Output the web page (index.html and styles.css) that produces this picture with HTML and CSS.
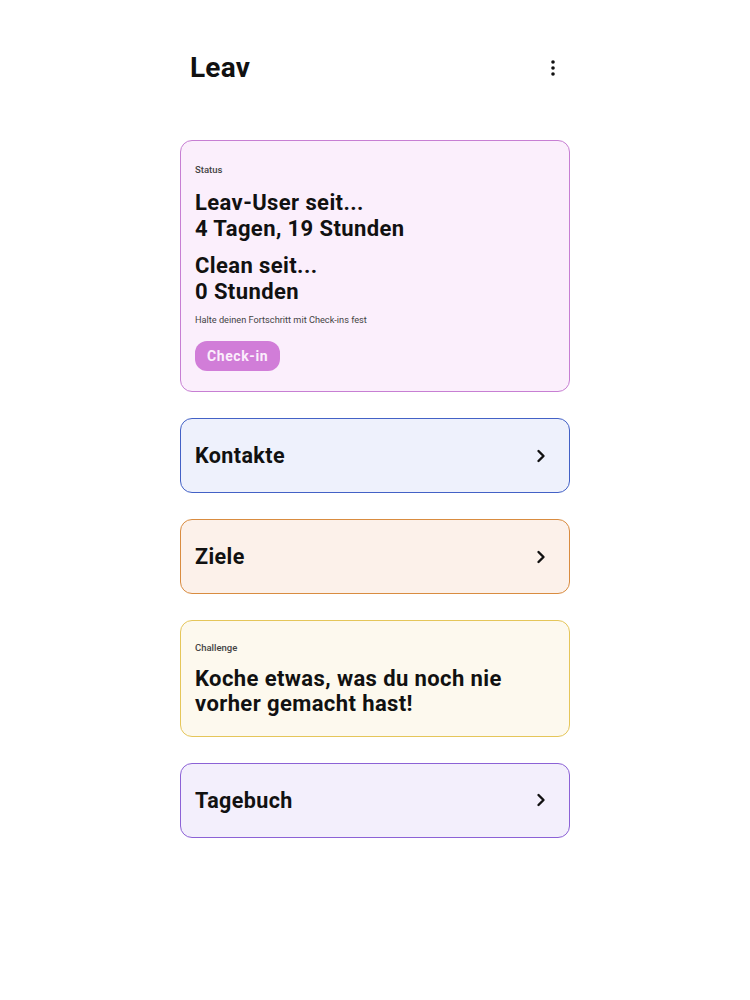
FILE: index.html
```html
<!DOCTYPE html>
<html lang="de">
<head>
<meta charset="utf-8">
<title>Leav</title>
<link rel="stylesheet" href="styles.css">
</head>
<body>
<div class="app">
  <header class="topbar">
    <h1 class="brand">Leav</h1>
    <button class="menu" aria-label="Menü">
      <svg width="6" height="18" viewBox="0 0 6 18"><circle cx="3" cy="3" r="1.8" fill="#111"/><circle cx="3" cy="9" r="1.8" fill="#111"/><circle cx="3" cy="15" r="1.8" fill="#111"/></svg>
    </button>
  </header>

  <main class="cards">
    <section class="card card-status">
      <div class="label">Status</div>
      <div class="headline">Leav-User seit...<br>4 Tagen, 19 Stunden</div>
      <div class="headline second">Clean seit...<br>0 Stunden</div>
      <div class="hint">Halte deinen Fortschritt mit Check-ins fest</div>
      <button class="checkin">Check-in</button>
    </section>

    <a class="card card-link card-kontakte">
      <span class="link-title">Kontakte</span>
      <svg class="chev" width="10" height="14" viewBox="0 0 10 14"><path d="M2.5 2 L7.5 7 L2.5 12" fill="none" stroke="#111" stroke-width="2.4" stroke-linecap="round" stroke-linejoin="round"/></svg>
    </a>

    <a class="card card-link card-ziele">
      <span class="link-title">Ziele</span>
      <svg class="chev" width="10" height="14" viewBox="0 0 10 14"><path d="M2.5 2 L7.5 7 L2.5 12" fill="none" stroke="#111" stroke-width="2.4" stroke-linecap="round" stroke-linejoin="round"/></svg>
    </a>

    <section class="card card-challenge">
      <div class="label">Challenge</div>
      <div class="headline challenge-text">Koche etwas, was du noch nie<br>vorher gemacht hast!</div>
    </section>

    <a class="card card-link card-tagebuch">
      <span class="link-title">Tagebuch</span>
      <svg class="chev" width="10" height="14" viewBox="0 0 10 14"><path d="M2.5 2 L7.5 7 L2.5 12" fill="none" stroke="#111" stroke-width="2.4" stroke-linecap="round" stroke-linejoin="round"/></svg>
    </a>
  </main>
</div>
</body>
</html>
```

FILE: styles.css
```css
* { box-sizing: border-box; }

html, body {
  margin: 0;
  padding: 0;
  background: #ffffff;
}

body {
  font-family: Roboto, "Noto Sans", "Liberation Sans", sans-serif;
  color: #111111;
}

.app {
  width: 390px;
  margin: 0 auto;
  padding-top: 48px;
}

.topbar {
  display: flex;
  align-items: center;
  justify-content: space-between;
  height: 40px;
  padding: 0 11px 0 10px;
}

.brand {
  margin: 0;
  font-size: 28px;
  font-weight: 700;
  line-height: 40px;
  letter-spacing: 0.2px;
}

.menu {
  border: 0;
  background: none;
  padding: 0;
  display: flex;
  align-items: center;
  justify-content: center;
  width: 12px;
  height: 24px;
}

.cards {
  display: flex;
  flex-direction: column;
  gap: 26px;
  margin-top: 52px;
}

.card {
  display: block;
  border: 1.5px solid;
  border-radius: 12px;
  color: #111111;
  text-decoration: none;
}

.card-status {
  background: #fbeffc;
  border-color: #c77fd3;
  padding: 22px 14px 20.5px;
}

.label {
  font-size: 9.5px;
  line-height: 14px;
  color: #444;
  font-weight: 500;
}

.headline {
  font-size: 22px;
  font-weight: 700;
  line-height: 26px;
  margin-top: 12.5px;
  letter-spacing: 0.4px;
}

.headline.second {
  margin-top: 11px;
}

.hint {
  font-size: 9.2px;
  line-height: 12px;
  color: #444;
  margin-top: 9px;
}

.checkin {
  display: block;
  margin-top: 15px;
  height: 30px;
  padding: 0 12px;
  border: 0;
  border-radius: 12px;
  background: #d17dd8;
  color: #fbeefc;
  font-family: Roboto, "Noto Sans", sans-serif;
  font-size: 14px;
  font-weight: 700;
  letter-spacing: 0.6px;
}

.card-link {
  display: flex;
  align-items: center;
  justify-content: space-between;
  height: 75px;
  padding: 0 23px 0 14px;
}

.link-title {
  font-size: 21.5px;
  font-weight: 700;
  letter-spacing: 0.4px;
}

.chev {
  display: block;
}

.card-kontakte {
  background: #eef1fc;
  border-color: #4361c6;
}

.card-ziele {
  background: #fcf1ea;
  border-color: #d98c40;
}

.card-challenge {
  background: #fdf9ee;
  border-color: #e5c65a;
  padding: 20px 14px 19.5px;
}

.challenge-text {
  margin-top: 11px;
  line-height: 25px;
}

.card-tagebuch {
  background: #f3effc;
  border-color: #8c62d6;
}
```
